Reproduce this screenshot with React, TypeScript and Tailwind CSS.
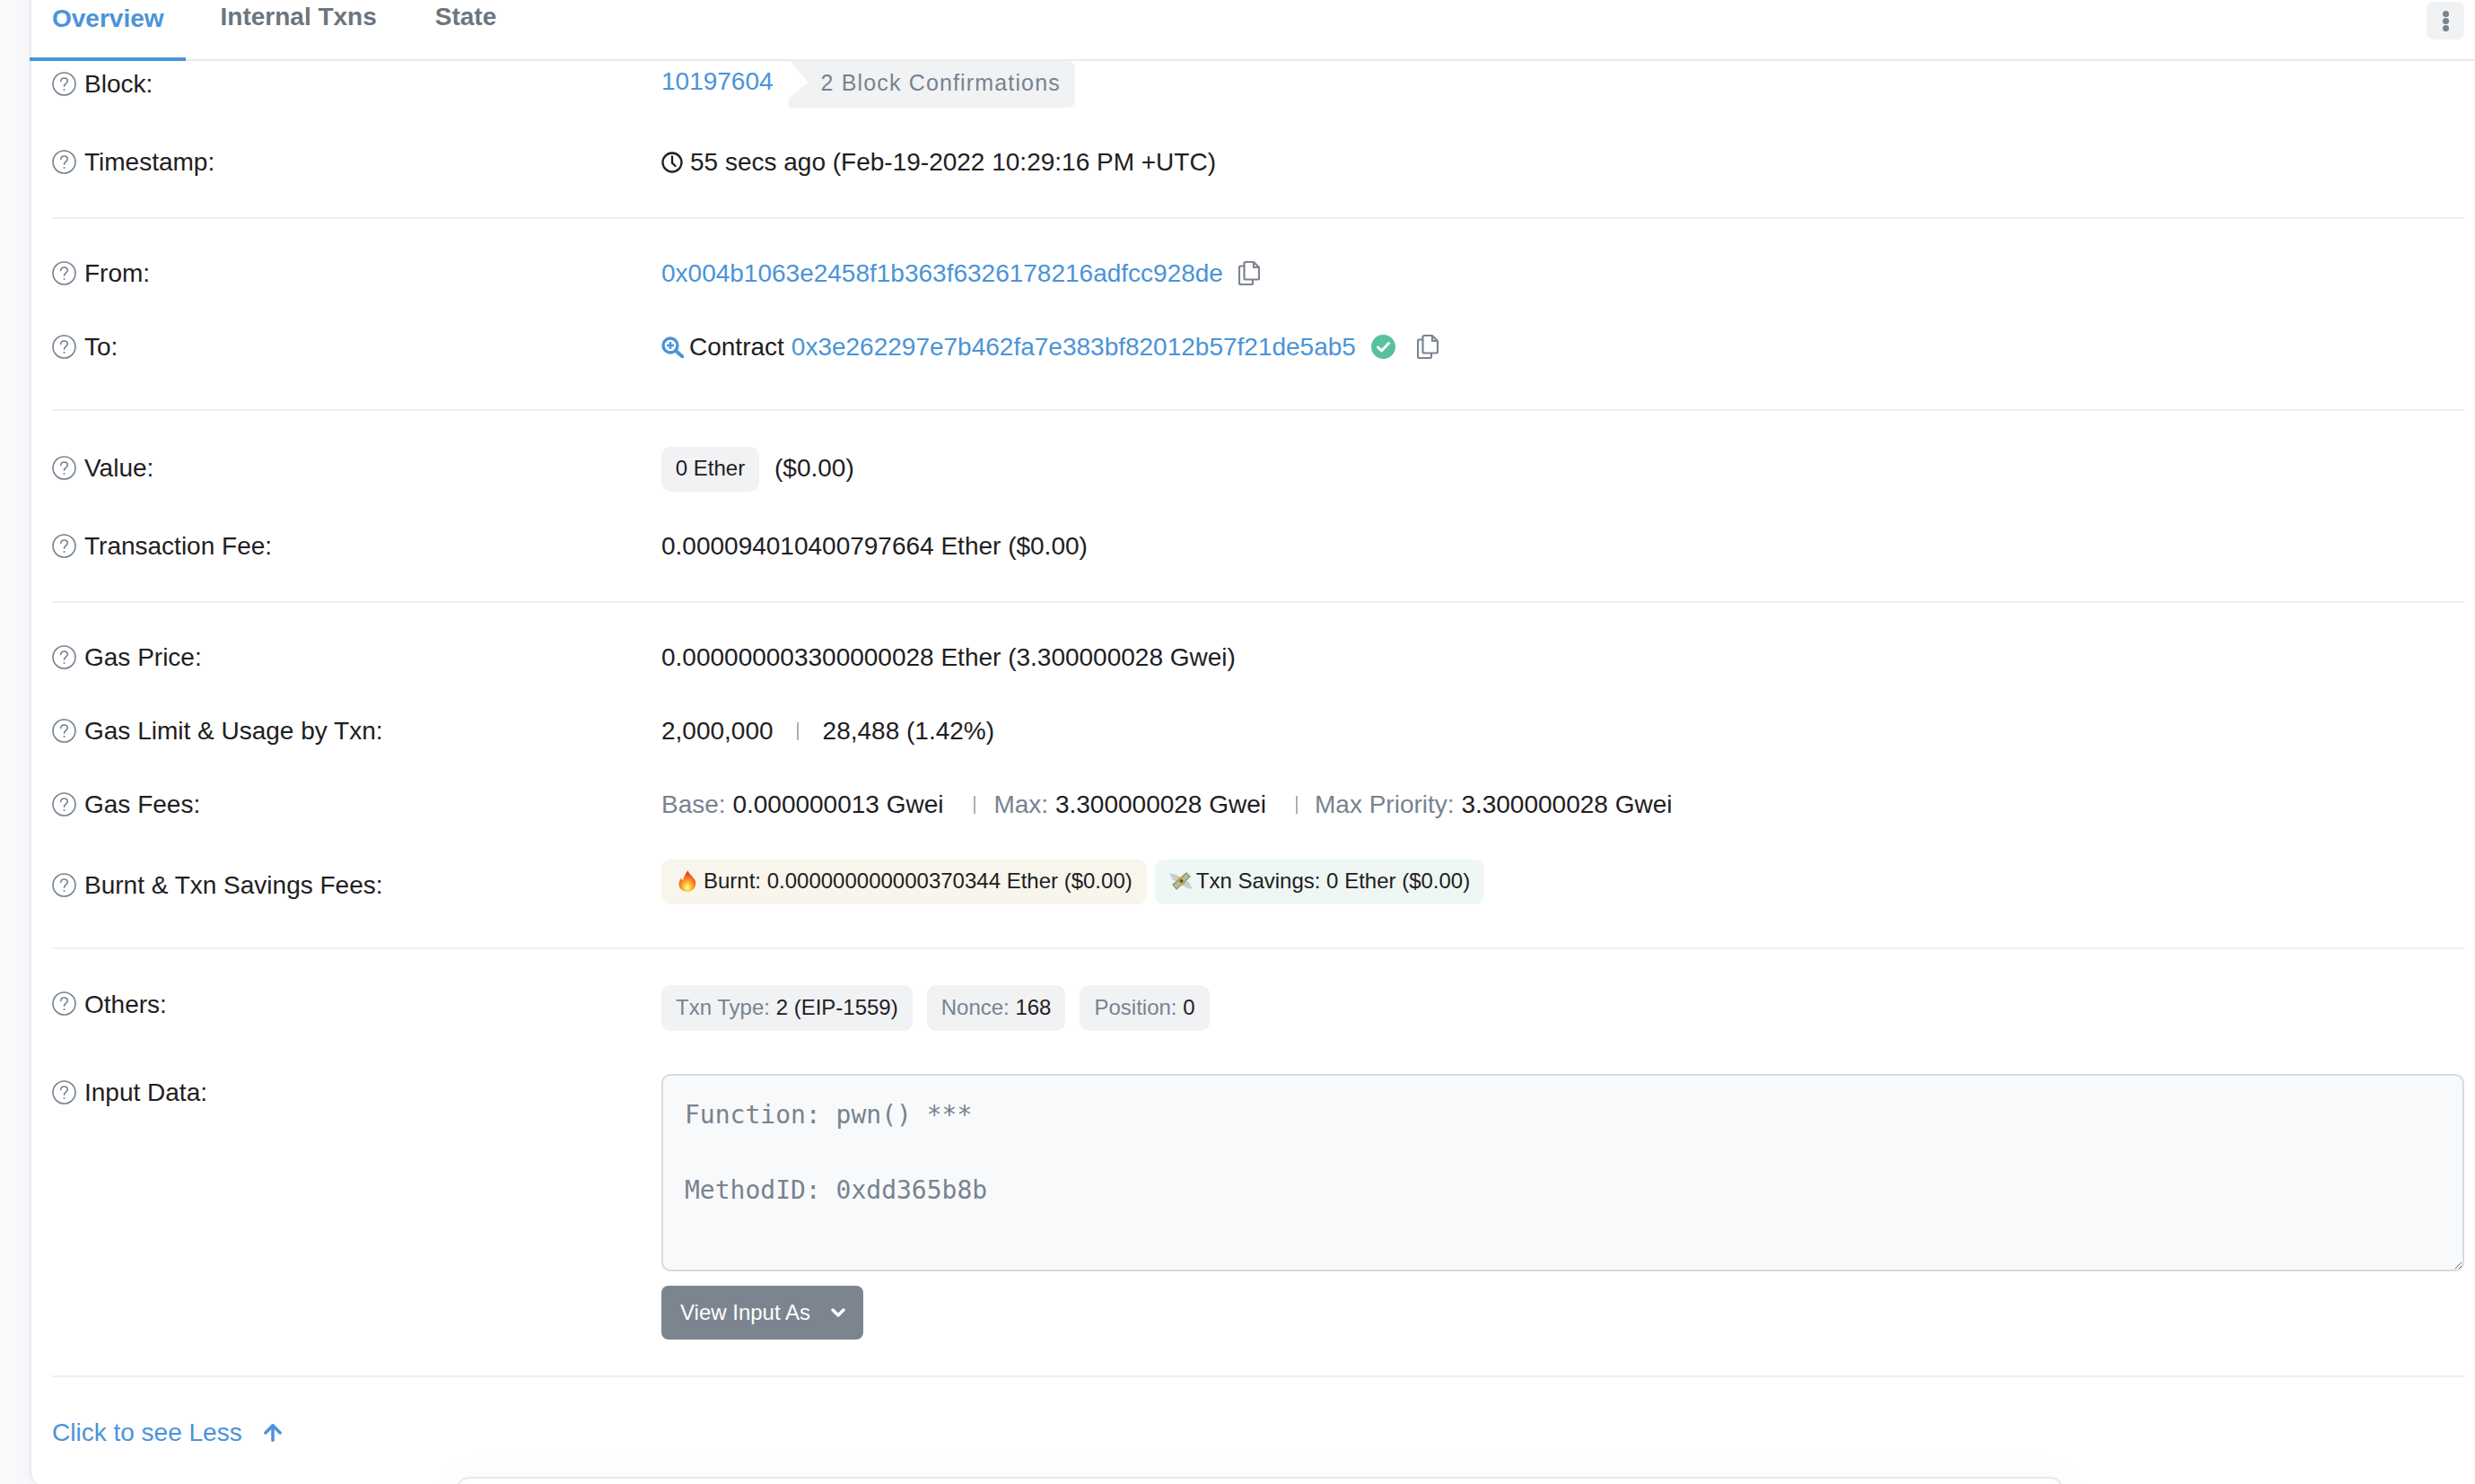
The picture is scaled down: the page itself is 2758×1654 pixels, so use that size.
import React from 'react';
import { ArrowUp } from 'lucide-react';

const HelpIcon = () => (
  <svg width="27" height="27" viewBox="0 0 27 27" fill="none" stroke="#77838f" strokeWidth="1.6" className="-mt-[2px] shrink-0">
    <circle cx="13.5" cy="13.5" r="12.5" />
    <path d="M9.8 10.6c0-2.2 1.6-3.6 3.8-3.6s3.7 1.3 3.7 3.3c0 2.9-3.8 3-3.8 6" strokeLinecap="round" />
    <circle cx="13.5" cy="20" r="1" fill="#77838f" stroke="none" />
  </svg>
);

const CopyIcon = () => (
  <svg width="24" height="28" viewBox="0 0 24 28" fill="none" stroke="#7c858f" strokeWidth="2.2" strokeLinejoin="round" className="mb-[3px]">
    <path d="M8 2h9l6 6v12a1.5 1.5 0 0 1-1.5 1.5H8A1.5 1.5 0 0 1 6.500 20V3.500A1.500 1.500 0 0 1 8 2z" />
    <path d="M17 2v6h6" />
    <path d="M6.500 6.500H2.500A1.500 1.500 0 0 0 1 8v17.500A1.500 1.500 0 0 0 2.500 27h12a1.500 1.500 0 0 0 1.500-1.500v-4" />
  </svg>
);

const ClockIcon = () => (
  <svg width="24" height="24" viewBox="0 0 24 24" fill="none" stroke="#1e2022" strokeWidth="2.300" className="mr-[8px] shrink-0">
    <circle cx="12" cy="12" r="10.500" />
    <path d="M12 5.500V12.500l3.500 3.500" strokeLinecap="round" />
  </svg>
);

const SearchPlusIcon = () => (
  <svg width="25" height="24" viewBox="0 0 25 24" fill="none" stroke="#4a94d8" className="mr-[6px] shrink-0">
    <circle cx="10" cy="10" r="8" strokeWidth="3.400" />
    <path d="M16 16l7.500 6.500" strokeWidth="4" strokeLinecap="round" />
    <path d="M10 6v8M6 10h8" strokeWidth="2.600" />
  </svg>
);

const VerifiedIcon = () => (
  <svg width="27" height="27" viewBox="0 0 27 27" className="mb-[1px]">
    <circle cx="13.500" cy="13.500" r="13.500" fill="#59c29d" />
    <path d="M7.500 14l4 4 8-8.500" fill="none" stroke="#fff" strokeWidth="3" strokeLinecap="round" strokeLinejoin="round" />
  </svg>
);

const FlameIcon = () => (
  <svg width="20" height="24" viewBox="0 0 20 24" className="ml-[3px] mr-[8px] shrink-0">
    <defs>
      <radialGradient id="flame" cx="50%" cy="80%" r="70%">
        <stop offset="0%" stopColor="#fff6c8" />
        <stop offset="30%" stopColor="#fdc92f" />
        <stop offset="62%" stopColor="#f7811e" />
        <stop offset="100%" stopColor="#e4391c" />
      </radialGradient>
    </defs>
    <path d="M10.500 0c.8 4 5.500 6.500 8 11 2.500 6-1.800 13-8.500 13S-1 18 1 12.500c.5-1.500 1.500-3 2.300-3.800.2 1.500.8 2.300 1.700 2.800C5.500 7.500 8 4 10.500 0z" fill="url(#flame)" />
  </svg>
);

const MoneyIcon = () => (
  <svg width="26" height="22" viewBox="0 0 26 22" className="mr-[4px] shrink-0">
    <path d="M0 2l8 2 5 4-3 4-6-2zM26 20l-8-2-5-4 3-4 6 2z" fill="#c9ced0" />
    <path d="M3 15L19 1l5 5L8 21z" fill="#8d9b74" />
    <path d="M5 15.500L19 3l3 3L8 19z" fill="#b3bd97" />
    <path d="M9 9l3-3 6 7-3 3z" fill="#d9a92e" />
    <circle cx="13.500" cy="11" r="2" fill="#5d5a3a" />
  </svg>
);

const Row = ({ label, labelClass = '', className = '', children }: { label: string; labelClass?: string; className?: string; children: React.ReactNode }) => (
  <div className={`grid h-[50px] grid-cols-[679px_1fr] items-center ${className}`}>
    <div className={`flex items-center gap-[9px] ${labelClass}`}>
      <HelpIcon />
      <span>{label}</span>
    </div>
    <div className="flex items-center">{children}</div>
  </div>
);

const Divider = ({ className = '' }: { className?: string }) => <hr className={`h-[2px] border-0 bg-[#eeeff4] ${className}`} />;

const Sep = ({ className = '' }: { className?: string }) => <span className={`h-[20px] w-[2px] bg-[#a9b1ba] ${className}`} />;

const Pill = ({ muted, value }: { muted: string; value: string }) => (
  <span className="flex h-[51px] items-center rounded-[10px] bg-[#f1f2f4] px-[16px] pb-[2px] text-[24px]">
    <span className="text-[#77838f]">{muted}</span>&nbsp;{value}
  </span>
);

const App: React.FC = () => {
  return (
    <div className="flex h-[1654px] w-[2758px] overflow-hidden bg-[#f8f9fa] font-['Liberation_Sans',Arial,sans-serif] text-[28px] text-[#1e2022]">
      <div className="ml-[33px] h-[1657px] flex-1 rounded-bl-[18px] border-l-2 border-[#e7eaf3] bg-white shadow-[0_0_12px_rgba(151,164,175,0.12)]">
        <div className="-ml-[2px] flex h-[68px] items-start border-b-2 border-[#e7eaf0]">
          <div className="-mb-[2px] mr-[14px] h-[68px] border-b-4 border-[#4a94d8] pl-[25px] pr-[24px] text-[#4a94d8]">
            <span className="font-bold leading-[38px]">Overview</span>
          </div>
          <div className="mr-[15px] px-[25px] font-bold leading-[38px] text-[#6c757e]">Internal Txns</div>
          <div className="px-[25px] font-bold leading-[38px] text-[#6c757e]">State</div>
          <button type="button" className="ml-auto mr-[12px] mt-[2px] flex h-[42px] w-[42px] flex-col items-center justify-center gap-[1px] rounded-[8px] bg-[#f1f2f4]">
            <span className="h-[7px] w-[7px] rounded-full bg-[#77838f]" />
            <span className="h-[7px] w-[7px] rounded-full bg-[#77838f]" />
            <span className="h-[7px] w-[7px] rounded-full bg-[#77838f]" />
          </button>
        </div>

        <div className="pl-[23px] pr-[12px]">
          <Row label="Block:">
            <a className="mb-[6px] text-[#4a94d8]">10197604</a>
            <span className="ml-[17px] flex h-[52px] w-[319px] items-center rounded-r-[8px] bg-[#f1f2f4] pb-[2px] pl-[36px] text-[25px] tracking-[1.15px] text-[#77838f] [clip-path:polygon(2px_0,100%_0,100%_100%,0_100%,0_42px,22px_24px)]">
              2 Block Confirmations
            </span>
          </Row>
          <Row label="Timestamp:" className="mt-[38px]">
            <ClockIcon />
            <span>55 secs ago (Feb-19-2022 10:29:16 PM +UTC)</span>
          </Row>
          <Divider className="mt-[36px]" />

          <Row label="From:" className="mt-[36px]">
            <a className="text-[#4a94d8]">0x004b1063e2458f1b363f6326178216adfcc928de</a>
            <span className="ml-[17px] flex"><CopyIcon /></span>
          </Row>
          <Row label="To:" className="mt-[32px]">
            <SearchPlusIcon />
            <span>Contract</span>
            <a className="ml-[8px] text-[#4a94d8]">0x3e262297e7b462fa7e383bf82012b57f21de5ab5</a>
            <span className="ml-[17px] flex"><VerifiedIcon /></span>
            <span className="ml-[24px] flex"><CopyIcon /></span>
          </Row>
          <Divider className="mt-[44px]" />

          <Row label="Value:" labelClass="mb-[2px]" className="mt-[40px]">
            <span className="flex h-[50px] w-[109px] items-center justify-center rounded-[10px] bg-[#f1f2f4] pb-[2px] text-[24px]">0 Ether</span>
            <span className="mb-[2px] ml-[17px]">($0.00)</span>
          </Row>
          <Row label="Transaction Fee:" className="mt-[36px]">
            <span>0.000094010400797664 Ether ($0.00)</span>
          </Row>
          <Divider className="mt-[36px]" />

          <Row label="Gas Price:" className="mt-[36px]">
            <span>0.000000003300000028 Ether (3.300000028 Gwei)</span>
          </Row>
          <Row label="Gas Limit & Usage by Txn:" className="mt-[32px]">
            <span>2,000,000</span>
            <Sep className="ml-[26px] mr-[27px]" />
            <span>28,488 (1.42%)</span>
          </Row>
          <Row label="Gas Fees:" className="mt-[32px]">
            <span className="text-[#77838f]">Base:</span>&nbsp;<span>0.000000013 Gwei</span>
            <Sep className="ml-[34px] mr-[20px]" />
            <span className="text-[#77838f]">Max:</span>&nbsp;<span>3.300000028 Gwei</span>
            <Sep className="ml-[33px] mr-[19px]" />
            <span className="text-[#77838f]">Max Priority:</span>&nbsp;<span>3.300000028 Gwei</span>
          </Row>
          <Row label="Burnt & Txn Savings Fees:" labelClass="mt-[8px]" className="mt-[36px]">
            <span className="flex h-[50px] items-center rounded-[10px] bg-[#f8f5ec] pb-[2px] pl-[16px] pr-[16px] text-[24px]">
              <FlameIcon />
              Burnt: 0.000000000000370344 Ether ($0.00)
            </span>
            <span className="ml-[9px] flex h-[50px] items-center rounded-[10px] bg-[#eef7f4] pb-[2px] pl-[16px] pr-[16px] text-[24px]">
              <MoneyIcon />
              Txn Savings: 0 Ether ($0.00)
            </span>
          </Row>
          <Divider className="mt-[48px]" />

          <Row label="Others:" labelClass="mb-[8px]" className="mt-[40px] !h-[51px]">
            <div className="flex gap-[16px]">
              <Pill muted="Txn Type:" value="2 (EIP-1559)" />
              <Pill muted="Nonce:" value="168" />
              <Pill muted="Position:" value="0" />
            </div>
          </Row>

          <div className="mt-[48px] grid grid-cols-[679px_1fr] items-start">
            <div className="flex items-center gap-[9px]">
              <HelpIcon />
              <span>Input Data:</span>
            </div>
            <div>
              <textarea
                readOnly
                defaultValue={'Function: pwn() ***\n\nMethodID: 0xdd365b8b'}
                className="block h-[220px] w-full rounded-[10px] border-2 border-[#d5dae2] bg-[#f8f9fa] pl-[24px] pr-[24px] pt-[23px] font-['DejaVu_Sans_Mono',monospace] text-[28px] leading-[42px] text-[#77838f] outline-none"
              />
              <button type="button" className="mt-[16px] flex h-[60px] w-[225px] items-center rounded-[8px] bg-[#7c858f] pl-[21px] text-[24px] text-white">
                View Input As
                <svg width="16" height="12" viewBox="0 0 16 12" fill="none" stroke="#fff" strokeWidth="3.500" strokeLinecap="round" strokeLinejoin="round" className="ml-[23px]">
                  <path d="M2 3l6 6 6-6" />
                </svg>
              </button>
            </div>
          </div>
          <Divider className="mt-[40px]" />

          <div className="mt-[37px] flex h-[50px] items-center text-[#4a94d8]">
            <span>Click to see Less</span>
            <ArrowUp size={28} strokeWidth={3} className="ml-[20px]" />
          </div>
        </div>

        <div className="ml-[474px] mt-[24px] h-[40px] w-[1790px] rounded-t-[14px] border-2 border-b-0 border-[#e7eaf3] bg-white shadow-[0_0_30px_rgba(151,164,175,0.08)]" />
      </div>
    </div>
  );
};

export default App;
